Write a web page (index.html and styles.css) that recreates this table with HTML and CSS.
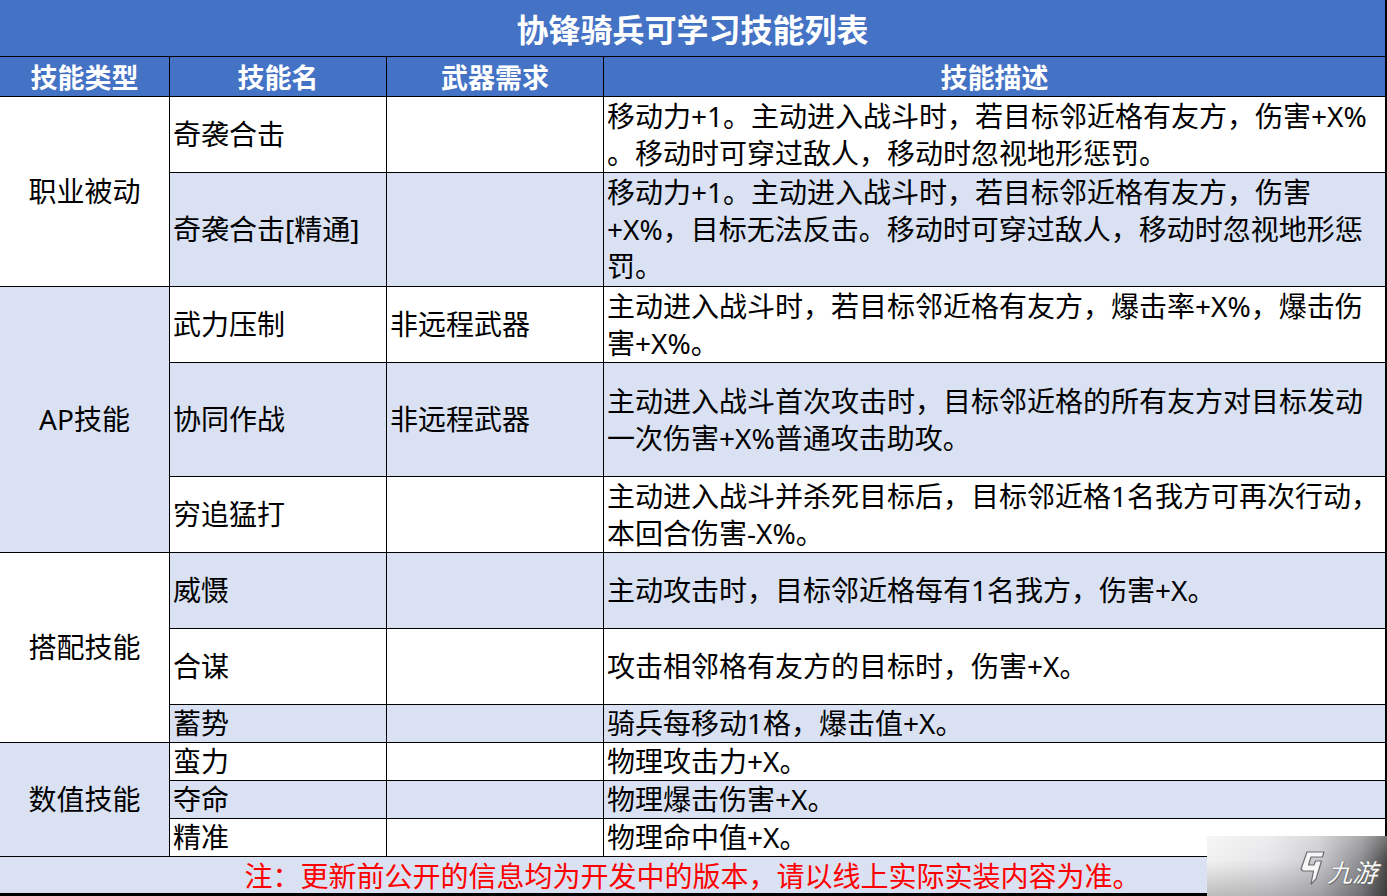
FILE: index.html
```html
<!DOCTYPE html>
<html lang="zh-CN">
<head>
<meta charset="utf-8">
<title>协锋骑兵可学习技能列表</title>
<link rel="stylesheet" href="styles.css">
</head>
<body>
<div class="page">
  <div class="sheet">
    <div class="title">协锋骑兵可学习技能列表</div>
    <div class="hd">技能类型</div>
    <div class="hd">技能名</div>
    <div class="hd">武器需求</div>
    <div class="hd">技能描述</div>

    <div class="group white span2">职业被动</div>
    <div class="cell white">奇袭合击</div>
    <div class="cell white"></div>
    <div class="cell white">移动力+1。主动进入战斗时，若目标邻近格有友方，伤害+X%<br>。移动时可穿过敌人，移动时忽视地形惩罚。</div>
    <div class="cell blue">奇袭合击[精通]</div>
    <div class="cell blue"></div>
    <div class="cell blue">移动力+1。主动进入战斗时，若目标邻近格有友方，伤害<br>+X%，目标无法反击。移动时可穿过敌人，移动时忽视地形惩<br>罚。</div>

    <div class="group blue span3">AP技能</div>
    <div class="cell white">武力压制</div>
    <div class="cell white">非远程武器</div>
    <div class="cell white">主动进入战斗时，若目标邻近格有友方，爆击率+X%，爆击伤<br>害+X%。</div>
    <div class="cell blue">协同作战</div>
    <div class="cell blue">非远程武器</div>
    <div class="cell blue">主动进入战斗首次攻击时，目标邻近格的所有友方对目标发动<br>一次伤害+X%普通攻击助攻。</div>
    <div class="cell white">穷追猛打</div>
    <div class="cell white"></div>
    <div class="cell white">主动进入战斗并杀死目标后，目标邻近格1名我方可再次行动，<br>本回合伤害-X%。</div>

    <div class="group white span3">搭配技能</div>
    <div class="cell blue">威慑</div>
    <div class="cell blue"></div>
    <div class="cell blue">主动攻击时，目标邻近格每有1名我方，伤害+X。</div>
    <div class="cell white">合谋</div>
    <div class="cell white"></div>
    <div class="cell white">攻击相邻格有友方的目标时，伤害+X。</div>
    <div class="cell blue">蓄势</div>
    <div class="cell blue"></div>
    <div class="cell blue">骑兵每移动1格，爆击值+X。</div>

    <div class="group blue span3">数值技能</div>
    <div class="cell white">蛮力</div>
    <div class="cell white"></div>
    <div class="cell white">物理攻击力+X。</div>
    <div class="cell blue">夺命</div>
    <div class="cell blue"></div>
    <div class="cell blue">物理爆击伤害+X。</div>
    <div class="cell white">精准</div>
    <div class="cell white"></div>
    <div class="cell white">物理命中值+X。</div>

    <div class="note">注：更新前公开的信息均为开发中的版本，请以线上实际实装内容为准。</div>
  </div>

  <div class="watermark">
    <svg class="wm-icon" width="26" height="34" viewBox="0 0 26 34">
      <path d="M8 1 L25 1 L23.5 6 L12 6 L9.5 14 L15 14 L16.5 10 L22.5 10 L17 28 L12 33 L14.5 20 L4 20 L2 18 Z" fill="#f7f7f7" stroke="#6c6c70" stroke-width="1.2" stroke-linejoin="round"/>
    </svg>
    <span class="wm-text">九游</span>
  </div>
</div>
</body>
</html>
```

FILE: styles.css
```css
html, body {
  margin: 0;
  padding: 0;
  background: #ffffff;
}

.page {
  position: relative;
  width: 1387px;
  height: 896px;
  overflow: hidden;
  font-family: "Noto Sans", "Noto Sans CJK SC", sans-serif;
  color: #000;
}

.sheet {
  display: grid;
  grid-template-columns: 169px 216px 216px 781px;
  grid-template-rows: 56px 39px 75px 113px 75px 113px 75px 75px 75px 37px 37px 37px 37px 36px;
  column-gap: 1px;
  row-gap: 1px;
  background: #000;
  padding: 0 2px 3px 0;
  width: 1385px;
  height: 893px;
}

.title {
  grid-column: 1 / -1;
  background: #4472c4;
  color: #fff;
  font-weight: 700;
  font-size: 32px;
  display: flex;
  align-items: center;
  justify-content: center;
}

.hd {
  background: #4472c4;
  color: #fff;
  font-weight: 700;
  font-size: 27px;
  display: flex;
  align-items: center;
  justify-content: center;
}

.cell, .group {
  font-size: 28px;
  line-height: 37px;
  display: flex;
  align-items: center;
  white-space: nowrap;
  overflow: hidden;
}

.cell {
  padding: 0 2px 0 3px;
}

.group {
  justify-content: center;
}

.span2 { grid-row: span 2; }
.span3 { grid-row: span 3; }

.white { background: #ffffff; }
.blue { background: #d9e1f2; }

.note {
  grid-column: 1 / -1;
  background: #d9e1f2;
  color: #ff0000;
  font-size: 28px;
  display: flex;
  align-items: center;
  justify-content: center;
}

.watermark {
  position: absolute;
  right: 0;
  bottom: 0;
  width: 180px;
  height: 60px;
  background:
    linear-gradient(to bottom, rgba(255,255,255,0.25), rgba(255,255,255,0) 40%, rgba(0,0,0,0.22)),
    linear-gradient(to right, #f2f2f2 0%, #e6e6e9 35%, #cbcbcf 62%, #8e8e92 86%, #4a4a4a 100%);
  display: flex;
  align-items: center;
  justify-content: flex-end;
  gap: 6px;
  padding: 4px 6px 0 0;
  box-sizing: border-box;
}

.wm-text {
  font-family: "Noto Sans CJK SC", sans-serif;
  font-size: 25px;
  font-weight: 400;
  color: #f8f8f8;
  transform: skewX(-16deg);
  line-height: 30px;
  padding-top: 6px;
  text-shadow: 0 0 1px #555, 1px 1px 0 #6a6a6a;
}
```
